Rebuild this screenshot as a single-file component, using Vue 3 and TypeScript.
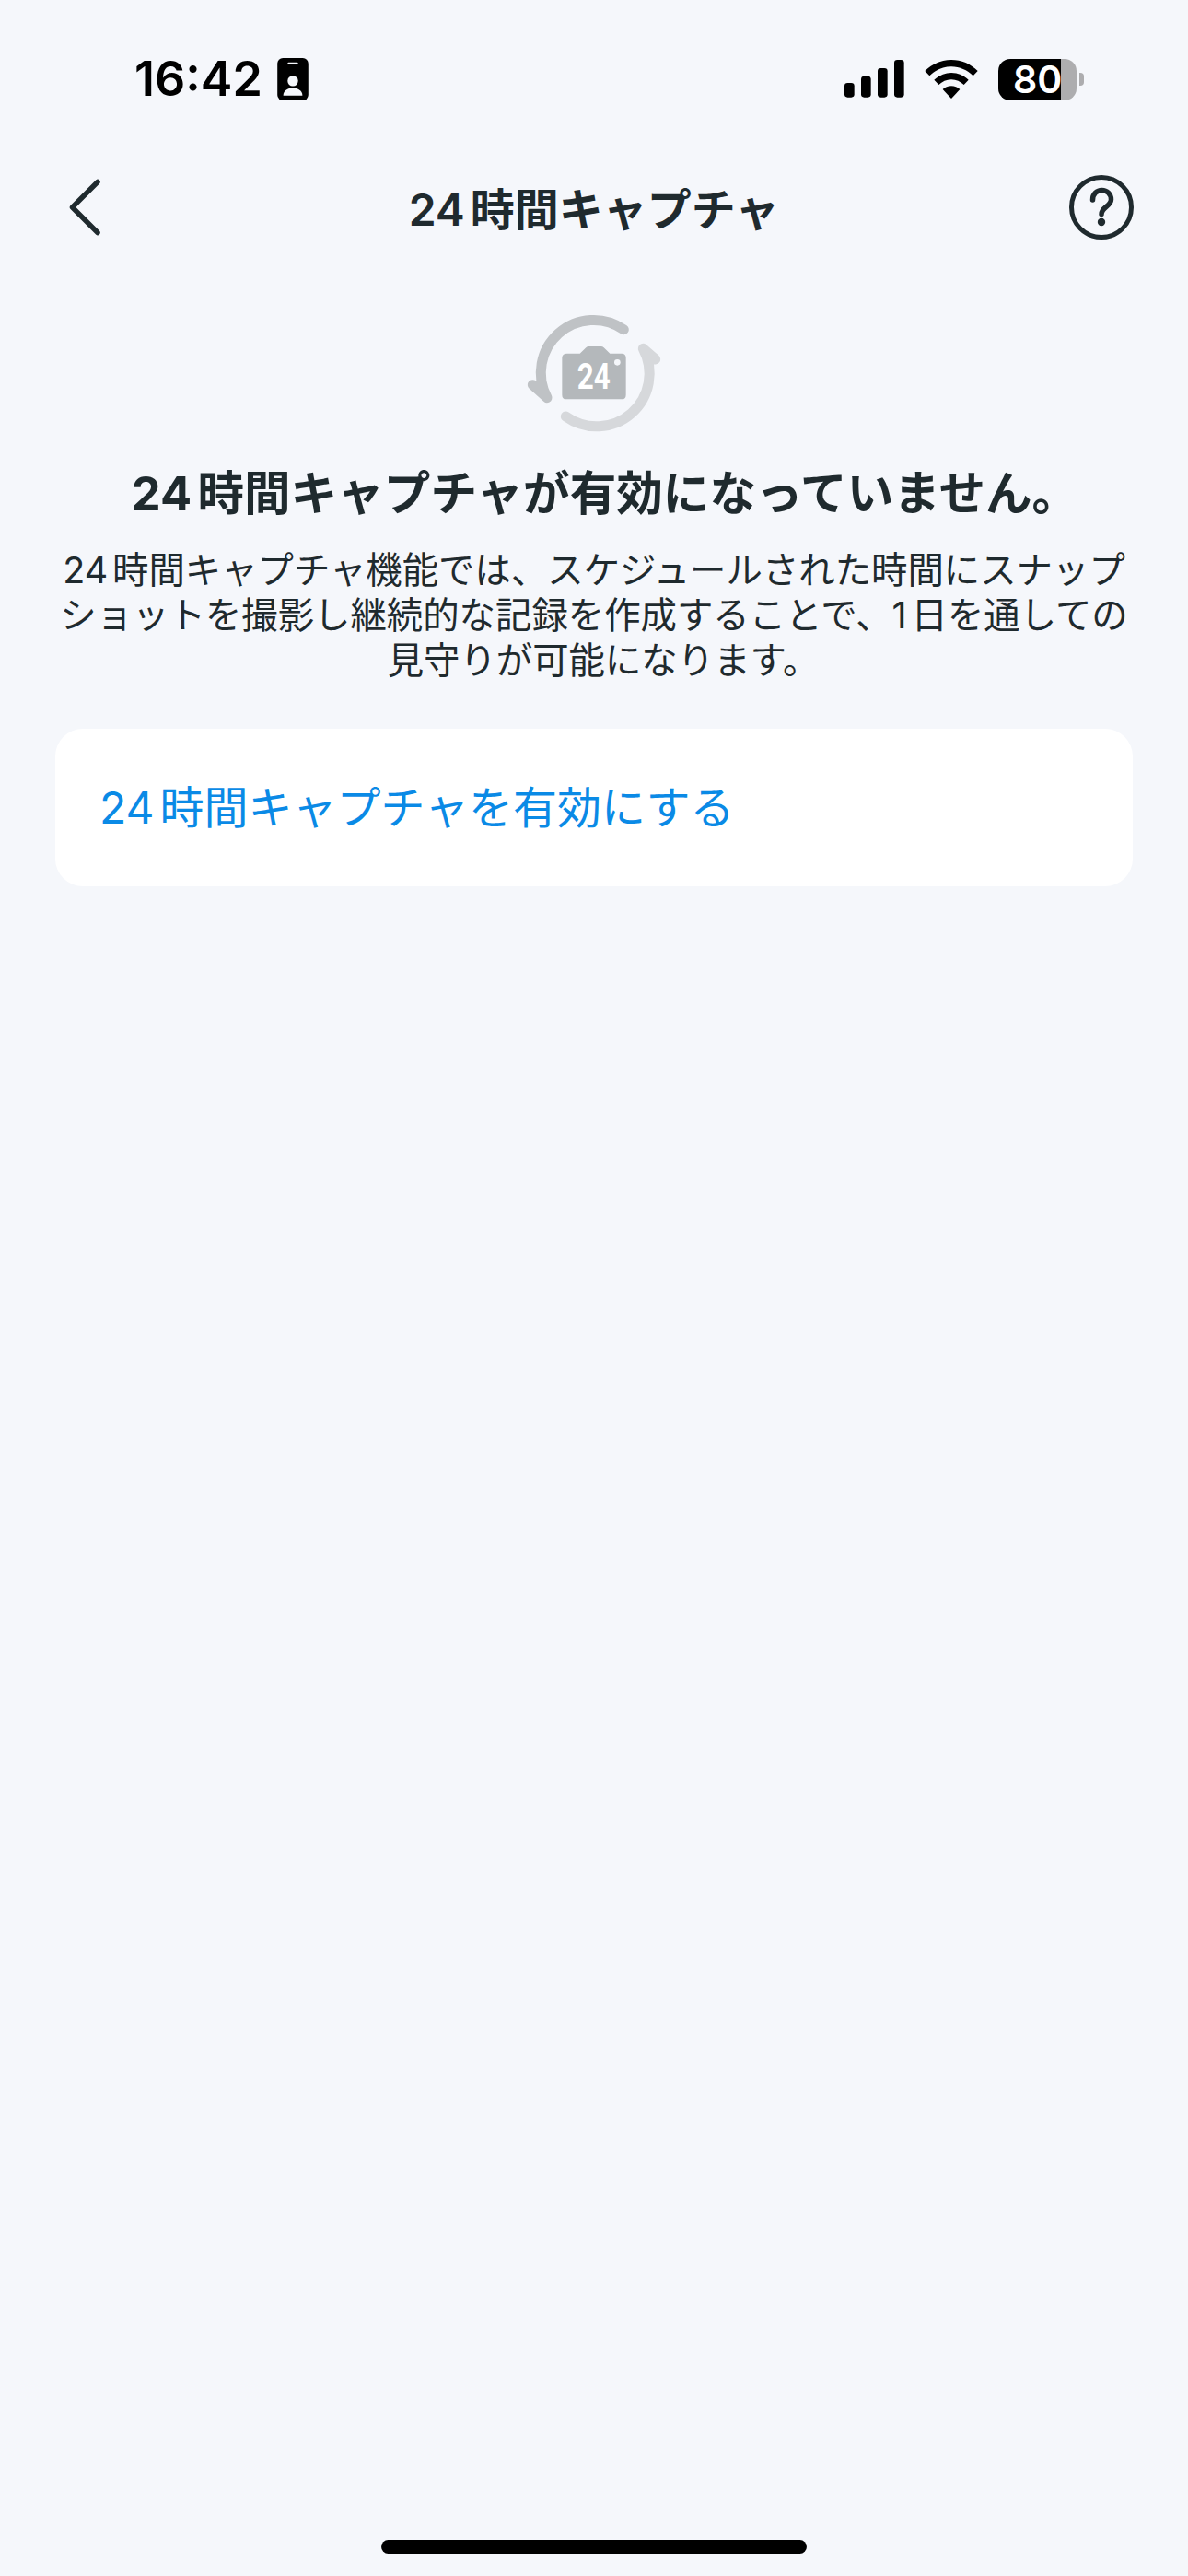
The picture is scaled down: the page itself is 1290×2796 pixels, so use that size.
<script setup lang="ts">
// 24-hour capture settings page, disabled state
const title = "24時間キャプチャ";
const heading = "24時間キャプチャが有効になっていません。";
const description =
  "24時間キャプチャ機能では、スケジュールされた時間にスナップショットを撮影し継続的な記録を作成することで、1日を通しての";
const descriptionEnd = "見守りが可能になります。";
const action = "24時間キャプチャを有効にする";
</script>

<template>
  <div class="page">
    <header class="status">
      <div class="status-left">
        <span class="time">16:42</span>
        <svg class="id-icon" width="34" height="46" viewBox="0 0 100 137">
          <rect width="100" height="137" rx="18" fill="#000" />
          <rect x="33" y="14" width="34" height="7" rx="3.5" fill="#f5f7fb" />
          <circle cx="50" cy="74" r="17" fill="#f5f7fb" />
          <path d="M19 121c0-15 14-24 31-24s31 9 31 24z" fill="#f5f7fb" />
        </svg>
      </div>
      <div class="status-right">
        <svg width="65" height="42" viewBox="0 0 195 126">
          <rect x="0" y="75" width="32" height="47" rx="10" />
          <rect x="54" y="53" width="32" height="69" rx="10" />
          <rect x="108" y="27" width="32" height="95" rx="10" />
          <rect x="162" y="0" width="32" height="122" rx="10" />
        </svg>
        <svg class="wifi" width="58" height="42" viewBox="0 0 174 126">
          <path d="M87 0C54 0 24 13 1 36l15 16c19-19 44-30 71-30s52 11 71 30l15-16C150 13 120 0 87 0z" />
          <path d="M87 42c-22 0-41 9-56 23l15 16c11-10 25-17 41-17s30 7 41 17l15-16C128 51 109 42 87 42z" />
          <path d="M87 85c-11 0-20 4-28 11l28 30 28-30c-8-7-17-11-28-11z" />
        </svg>
        <div class="battery">
          <div class="battery-body">
            <span class="battery-level">80</span>
          </div>
          <span class="battery-nub"></span>
        </div>
      </div>
    </header>

    <nav class="nav">
      <button class="nav-btn back" aria-label="戻る">
        <svg width="36" height="62" viewBox="0 0 36 62" fill="none">
          <path d="M31 3.5 3.5 31l27.5 27.5" stroke="#1f2a2e" stroke-width="5.5" stroke-linecap="round" stroke-linejoin="round" />
        </svg>
      </button>
      <h1 class="nav-title">{{ title }}</h1>
      <button class="nav-btn help" aria-label="ヘルプ">
        <svg width="70" height="70" viewBox="0 0 70 70" fill="none" stroke="#1f2a2e">
          <circle cx="35" cy="35" r="32.5" stroke-width="5" />
          <path d="M25.5 27C25.5 20.5 30 16.5 35.5 16.5S45.5 20.5 45.5 26.5C45.5 34 35 34.5 35 42.5" stroke-width="5.5" stroke-linecap="round" />
          <circle cx="35" cy="51" r="4.2" fill="#1f2a2e" stroke="none" />
        </svg>
      </button>
    </nav>

    <main class="content">
      <svg class="hero-icon" width="250" height="160" viewBox="0 0 750 480">
        <path d="M472 110A172 172 0 0 0 222 332L175 290" fill="none" stroke="#bfc2c5" stroke-width="33" stroke-linecap="round" stroke-linejoin="round" />
        <path d="M283 393A172 172 0 0 0 535 172L575 207" fill="none" stroke="#d6d8db" stroke-width="33" stroke-linecap="round" stroke-linejoin="round" />
        <path d="M287 188h42l20-19q4-4 9-4h40q5 0 9 4l20 19h38q14 0 14 14v121q0 14-14 14H285q-14 0-14-14V202q0-14 16-14z" fill="#b4b8bb" />
        <circle cx="451" cy="217" r="10" fill="#f5f7fb" />
        <text x="320" y="304" class="hero-text" textLength="108" lengthAdjust="spacingAndGlyphs">24</text>
      </svg>
      <h2 class="heading">{{ heading }}</h2>
      <p class="description">{{ description }}<span class="description-end">{{ descriptionEnd }}</span></p>
      <button class="action-card">{{ action }}</button>
    </main>

    <div class="home-indicator"></div>
  </div>
</template>

<style>
body {
  margin: 0;
  background: #f5f7fb;
}
</style>

<style scoped>
.page {
  width: 1290px;
  height: 2796px;
  background: #f5f7fb;
  color: #1f2a2e;
  font-family: "Inter", "Noto Sans CJK JP", sans-serif;
  text-autospace: normal;
  display: flex;
  flex-direction: column;
  overflow: hidden;
}
.status {
  height: 172px;
  box-sizing: border-box;
  padding: 0 113px 0 146px;
  display: flex;
  justify-content: space-between;
  align-items: center;
  color: #000;
}
.status-left {
  display: flex;
  align-items: center;
  gap: 16px;
}
.time {
  font-size: 52px;
  font-weight: 600;
  line-height: 1;
}
.status-right {
  display: flex;
  align-items: center;
  gap: 22px;
}
.battery {
  display: flex;
  align-items: center;
  gap: 3px;
}
.battery-body {
  width: 85px;
  height: 45px;
  border-radius: 13px;
  box-sizing: border-box;
  background: linear-gradient(to right, #000 80%, #adadaf 80%);
  color: #fff;
  display: flex;
  align-items: center;
  justify-content: flex-start;
  padding-left: 16px;
}
.battery-level {
  font-size: 41px;
  font-weight: 600;
  line-height: 1;
}
.battery-nub {
  width: 5px;
  height: 14px;
  background: #adadaf;
  border-radius: 0 4px 4px 0;
}
.nav {
  height: 106px;
  padding: 0 59px;
  display: grid;
  grid-template-columns: 1fr auto 1fr;
  align-items: center;
}
.nav-btn {
  padding: 0;
  border: 0;
  background: none;
  display: flex;
  align-items: center;
  justify-content: center;
}
.back {
  justify-self: start;
  margin-left: 16px;
}
.help {
  justify-self: end;
}
.nav-title {
  margin: 6px 0 0;
  font-size: 48px;
  font-weight: 600;
  line-height: 60px;
}
.content {
  display: flex;
  flex-direction: column;
  align-items: center;
  padding: 43px 60px 0;
}
.hero-icon {
  display: block;
}
.hero-text {
  fill: #fff;
  font-family: "Roboto", sans-serif;
  font-size: 114px;
  font-weight: 700;
}
.heading {
  margin: 23px 0 0;
  padding-left: 24px;
  font-size: 50.6px;
  font-weight: 700;
  line-height: 64px;
  text-align: center;
  white-space: nowrap;
}
.description {
  margin: 27px -6px 0;
  font-size: 39.4px;
  font-weight: 400;
  line-height: 49.2px;
  text-align: center;
}
.description-end {
  display: block;
  padding-left: 20px;
}
.action-card {
  width: 100%;
  height: 171px;
  margin-top: 48px;
  padding: 0 48px 6px;
  border: 0;
  border-radius: 30px;
  background: #fff;
  color: #0a8ae6;
  font: inherit;
  font-size: 48px;
  text-align: left;
}
.home-indicator {
  margin: auto auto 0;
  width: 462px;
  height: 15px;
  border-radius: 8px;
  background: #000;
  position: relative;
  bottom: 24px;
}
</style>
